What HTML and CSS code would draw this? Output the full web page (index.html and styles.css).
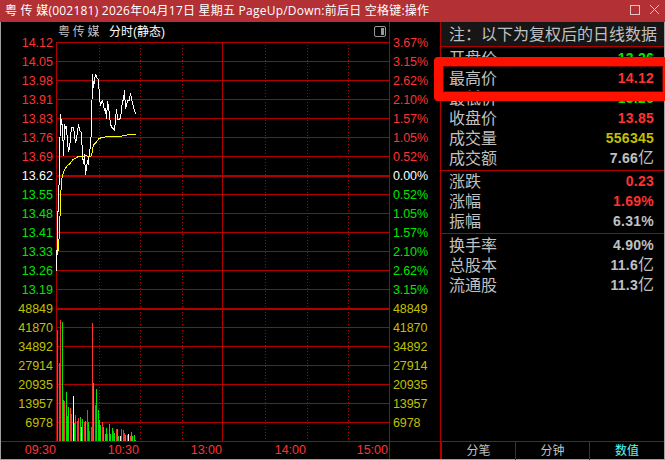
FILE: index.html
```
<!DOCTYPE html>
<html lang="zh-CN">
<head>
<meta charset="utf-8">
<title>粤传媒 002181</title>
<link rel="stylesheet" href="styles.css">
</head>
<body>
<div class="window">
  <header class="titlebar">
    <span class="title">粤 传 媒(002181) 2026年04月17日 星期五 PageUp/Down:前后日 空格键:操作</span>
    <svg class="controls" width="36" height="22" shape-rendering="crispEdges"><path d="M1.5 5.5h9v9h-9z" fill="none" stroke="#e8c4c4"/><path d="M21 5l9 9M30 5l-9 9" fill="none" stroke="#e8c4c4" shape-rendering="auto"/></svg>
  </header>
  <main class="body">
    <section class="chart">
      <div class="main">
        <div class="axis left" id="left"></div>
        <div class="middle">
          <div class="caption"><span class="name">粤 传 媒</span><span class="mode">分时(静态)</span>
            <svg class="toggle" width="13" height="12"><rect x=".5" y=".5" width="11" height="10" rx="1.5" fill="none" stroke="#999"/><path d="M7 2h3v7H7z" fill="#999"/></svg>
          </div>
          <svg class="plot" id="plot" width="334" height="399" viewBox="56 42 334 399" shape-rendering="crispEdges"></svg>
        </div>
        <div class="axis right" id="right"></div>
      </div>
      <div class="times"><span>09:30</span><span>10:30</span><span>13:00</span><span>14:00</span><span>15:00</span></div>
    </section>
    <aside class="panel">
      <div class="note">注：以下为复权后的日线数据</div>
      <dl class="group">
        <div><dt>开盘价</dt><dd class="green">13.26</dd></div>
        <div><dt>最高价</dt><dd class="red">14.12</dd></div>
        <div><dt>最低价</dt><dd class="green">13.26</dd></div>
        <div><dt>收盘价</dt><dd class="red">13.85</dd></div>
        <div><dt>成交量</dt><dd class="yellow">556345</dd></div>
        <div><dt>成交额</dt><dd>7.66<i>亿</i></dd></div>
      </dl>
      <dl class="group">
        <div><dt>涨跌</dt><dd class="red">0.23</dd></div>
        <div><dt>涨幅</dt><dd class="red">1.69%</dd></div>
        <div><dt>振幅</dt><dd>6.31%</dd></div>
      </dl>
      <dl class="group">
        <div><dt>换手率</dt><dd>4.90%</dd></div>
        <div><dt>总股本</dt><dd>11.6<i>亿</i></dd></div>
        <div><dt>流通股</dt><dd>11.3<i>亿</i></dd></div>
      </dl>
      <nav class="tabs"><span>分笔</span><span>分钟</span><span class="active">数值</span></nav>
    </aside>
  </main>
  <div class="highlight"></div>
</div>
<script src="chart.js"></script>
</body>
</html>
```
FILE: styles.css
```
* { box-sizing: border-box; }
body { margin: 0; background: #000; }
.window { position: relative; width: 665px; height: 460px; overflow: hidden; display: flex; flex-direction: column; background: #000; font-family: "Liberation Sans", "Noto Sans CJK SC", sans-serif; }
.titlebar { height: 22px; flex: none; display: flex; justify-content: space-between; align-items: center; padding-left: 5px; background: #b33035; color: #fff; }
.title { font: 12px/20px "Open Sans", "Noto Sans CJK SC", sans-serif; letter-spacing: .23px; white-space: nowrap; }
.body { flex: 1; display: flex; border: solid #a0a0a0; border-width: 0 1px 1px; }
.chart { width: 439px; display: flex; flex-direction: column; }
.main { height: 419px; display: flex; }
.axis { display: flex; flex-direction: column; padding-top: 11px; font-size: 12.5px; line-height: 20px; }
.axis span { height: 19px; }
.left { width: 55px; padding-right: 3px; text-align: right; }
.right { width: 49px; padding-left: 3px; letter-spacing: -.1px; }
.red { color: #ff3232; }
.green { color: #00e600; }
.yellow { color: #c0c000; }
.white { color: #fff; }
.middle { width: 334px; }
.caption { height: 20px; display: flex; align-items: center; padding: 0 2px; border-right: 1px solid #b00000; font-size: 12px; line-height: 20px; }
.name { width: 51px; color: #c0c0c0; letter-spacing: -.3px; white-space: nowrap; }
.mode { color: #fff; white-space: nowrap; }
.toggle { margin-left: auto; }
.plot { display: block; }
.times { flex: 1; display: grid; grid-template-columns: 55px 83px 83px 84px 82px; border-top: 1px solid #b00000; background: linear-gradient(#b00000, #b00000) 388px 0 / 1px 100% no-repeat; color: #ff3232; font-size: 12.5px; line-height: 17px; text-align: right; }
.panel { flex: 1; display: flex; flex-direction: column; border-left: 1px solid #b00000; }
.note { height: 25px; padding-left: 8px; background: #161616; border-bottom: 1px solid #b00000; color: #c0c0c0; font-size: 16px; line-height: 26px; white-space: nowrap; }
.group { margin: 0; padding: 1px 10px 2px 8px; border-bottom: 1px solid #b00000; color: #c0c0c0; }
.group + .group { padding: 0 10px 2px 8px; }
.group:last-of-type { padding-top: 1px; border-bottom: 0; flex: 1; }
.group div { display: flex; justify-content: space-between; height: 20px; line-height: 21px; }
.group dt { font-size: 16px; }
.group dd { display: flex; margin: 0; font-size: 14px; font-weight: bold; letter-spacing: .25px; }
.group i { font-style: normal; font-weight: normal; font-size: 16px; line-height: 20px; letter-spacing: 0; }
.tabs { display: grid; grid-template-columns: 73px 74px 1fr; height: 18px; border-top: 1px solid #b00000; border-left: 1px solid #b00000; color: #c0c0c0; font-size: 12px; line-height: 18px; text-align: center; }
.tabs span + span { border-left: 1px solid #b00000; }
.tabs .active { color: #54fcfc; }
.highlight { position: absolute; left: 434px; top: 57px; width: 238px; height: 44px; border: 9px solid #ff1100; border-right-width: 9px; border-radius: 4px; box-shadow: inset 0 0 0 1px #700000; }
```
FILE: chart.js
```
const prices = ['14.12','14.05','13.98','13.91','13.83','13.76','13.69','13.62','13.55','13.48','13.41','13.33','13.26','13.19'];
const percents = ['3.67%','3.15%','2.62%','2.10%','1.57%','1.05%','0.52%','0.00%','0.52%','1.05%','1.57%','2.10%','2.62%','3.15%'];
const volumes = ['48849','41870','34892','27914','20935','13957','6978'];
const tone = i => i < 7 ? 'red' : i === 7 ? 'white' : i < 14 ? 'green' : 'yellow';
const column = list => list.concat(volumes).map((t, i) => `<span class="${tone(i)}">${t}</span>`).join('');
document.getElementById('left').innerHTML = column(prices);
document.getElementById('right').innerHTML = column(percents);

let s = '';
for (let i = 0; i < 21; i++) s += `<rect x="56" y="${42 + i * 19}" width="334" height="${i === 7 || i === 14 ? 2 : 1}" fill="#b00000"/>`;
for (const x of [56, 222, 389]) s += `<rect x="${x}" y="42" width="1" height="399" fill="#b00000"/>`;
for (const x of [99, 140, 182, 265, 307, 348]) s += `<path d="M${x + .5} 45V440" stroke="#b00000" stroke-dasharray="1 2"/>`;

// x, top, colour of each minute's volume
const bars = '57 330 r,59 363 r,60 320 r,62 322 g,63 400 g,64 401 r,66 392 g,67 416 g,68 407 g,70 408 r,71 414 r,73 396 w,74 423 g,75 415 r,77 421 r,78 418 r,80 417 g,81 427 w,82 419 g,84 422 r,85 421 g,87 410 r,88 422 g,89 431 r,91 427 r,92 323 r,93 383 g,95 405 r,96 389 g,98 410 g,99 420 g,100 425 g,102 422 r,103 427 g,105 434 g,106 428 g,107 434 r,109 424 g,110 434 g,112 428 g,113 431 r,114 433 g,116 429 r,117 429 g,118 436 g,120 436 w,121 429 r,123 430 r,124 433 r,125 435 g,127 435 r,128 434 w,130 436 r,131 432 g,132 436 g,134 435 g,135 440 g';
const fills = { r: '#ff3232', g: '#00e600', w: '#fff' };
for (const b of bars.split(',')) {
  const [x, y, c] = b.split(' ');
  s += `<rect x="${x}" y="${y}" width="1" height="${441 - y}" fill="${fills[c]}"/>`;
}
const line = (pts, c) => `<polyline fill="none" stroke="${c}" points="${pts}"/>`;
s += line('56.5,271 56.5,251 57.5,250 57.5,212 58.5,211 59.5,160 60.5,114 61.5,124 62.5,124 63.5,156 64.5,124 65.5,128 66.5,127 67.5,143 68.5,151 69.5,149 71.5,127 73.5,127 75.5,143 76.5,139 78.5,124 79.5,130 81.5,133 82.5,156 83.5,164 84.5,154 85.5,175 87.5,160 88.5,165 89.5,150 90.5,148 91.5,127 92.5,74 93.5,88 94.5,80 95.5,74 96.5,77 98.5,80 99.5,98 100.5,106 101.5,102 102.5,101 104.5,110 105.5,109 106.5,119 107.5,101 108.5,106 110.5,124 111.5,127 114.5,130 115.5,120 116.5,109 117.5,119 119.5,119 120.5,118 122.5,101 123.5,100 124.5,90 125.5,109 127.5,101 129.5,100 130.5,93 131.5,99 133.5,107 135.5,114', '#fff');
s += line('57.5,255 58.5,247 59.5,232 60.5,200 61.5,180 63.5,172 66.5,166.5 70.5,163 72.5,160 77.5,157 82.5,156.5 85.5,155.5 88.5,156.5 91.5,156 92.5,150 93.5,145 96.5,142 98.5,139 101.5,137.5 108.5,136.5 120.5,136.5 123.5,135.5 131.5,134.5 135.5,134.5', '#ffff00');
document.getElementById('plot').innerHTML = s;
```
